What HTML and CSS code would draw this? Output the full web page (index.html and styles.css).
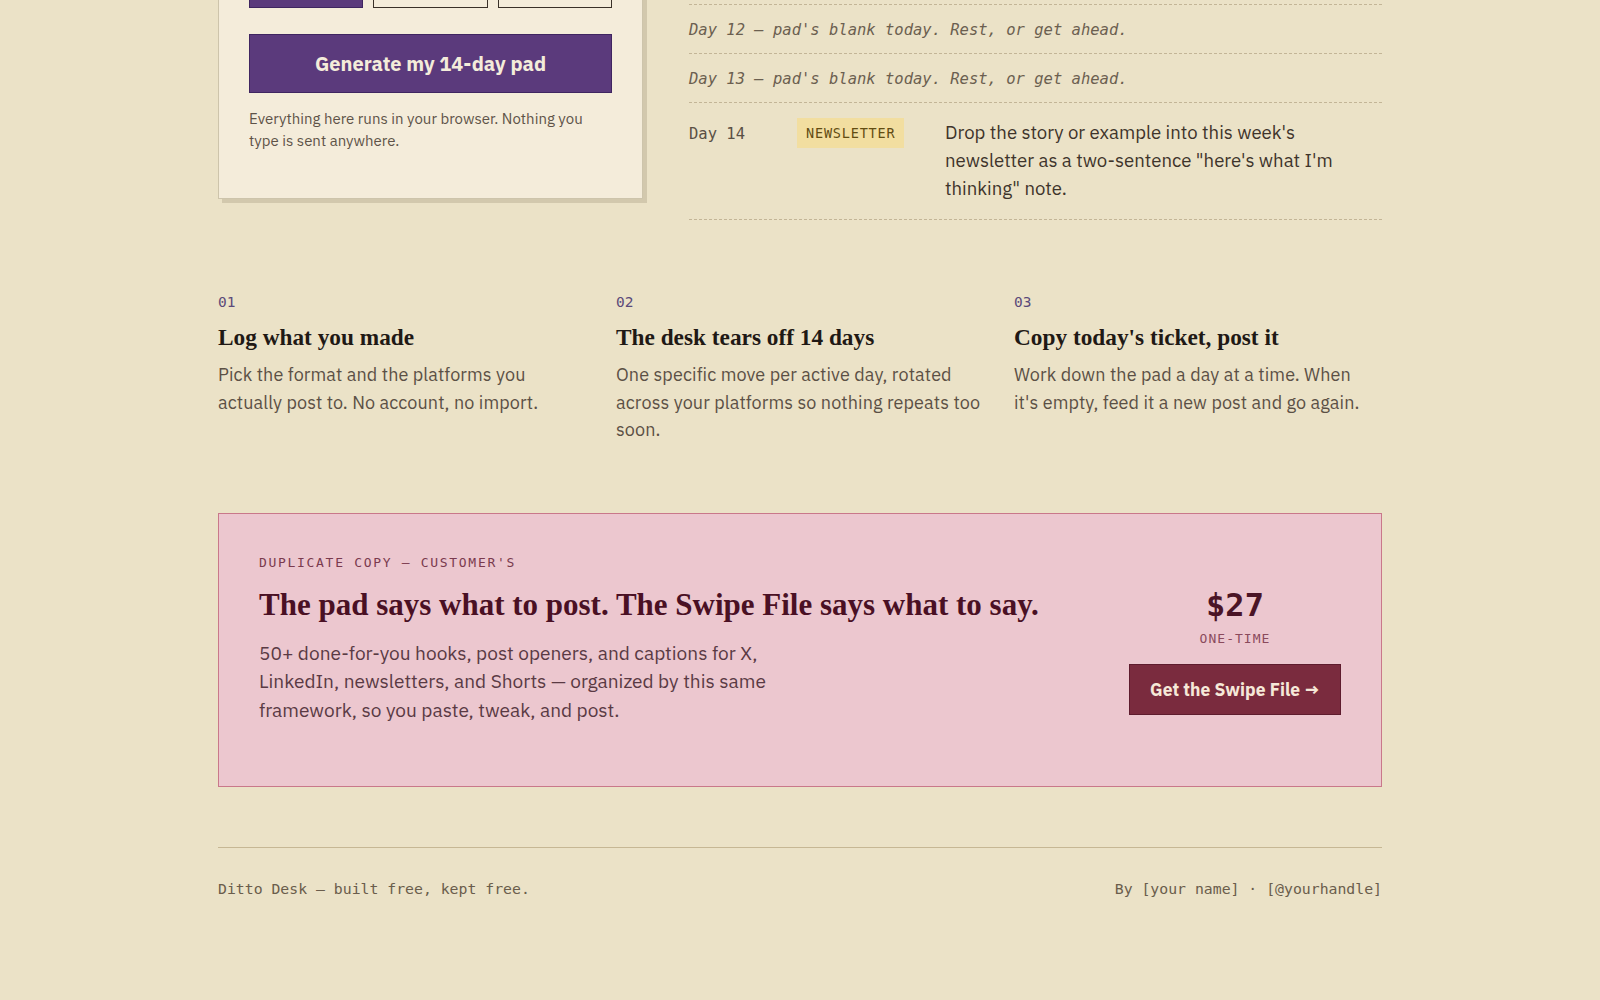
FILE: index.html
```html
<!DOCTYPE html>
<html lang="en">
<head>
<meta charset="utf-8">
<title>Ditto Desk</title>
<link rel="stylesheet" href="styles.css">
</head>
<body>
<main class="page">
  <section class="hero">
    <div class="card">
      <div class="opts">
        <button class="opt opt-on" aria-label="Post"></button>
        <button class="opt" aria-label="Thread"></button>
        <button class="opt" aria-label="Video"></button>
      </div>
      <button class="generate">Generate my 14-day pad</button>
      <p class="note">Everything here runs in your browser. Nothing you type is sent anywhere.</p>
    </div>
    <div class="days">
      <div class="row row-blank row-hidden"></div>
      <div class="row row-blank">Day 12 — pad's blank today. Rest, or get ahead.</div>
      <div class="row row-blank">Day 13 — pad's blank today. Rest, or get ahead.</div>
      <div class="row row-day">
        <span class="day-label">Day 14</span>
        <span class="badge">NEWSLETTER</span>
        <p class="day-text">Drop the story or example into this week's newsletter as a two-sentence "here's what I'm thinking" note.</p>
      </div>
    </div>
  </section>

  <section class="steps">
    <div class="step">
      <div class="step-num">01</div>
      <h3 class="step-title">Log what you made</h3>
      <p class="step-body">Pick the format and the platforms you actually post to. No account, no import.</p>
    </div>
    <div class="step">
      <div class="step-num">02</div>
      <h3 class="step-title">The desk tears off 14 days</h3>
      <p class="step-body">One specific move per active day, rotated across your platforms so nothing repeats too soon.</p>
    </div>
    <div class="step">
      <div class="step-num">03</div>
      <h3 class="step-title">Copy today's ticket, post it</h3>
      <p class="step-body">Work down the pad a day at a time. When it's&nbsp;empty, feed it a new post and go again.</p>
    </div>
  </section>

  <section class="promo">
    <div class="promo-main">
      <div class="promo-eyebrow">DUPLICATE COPY — CUSTOMER'S</div>
      <h2 class="promo-title">The pad says what to post. The Swipe File says what to say.</h2>
      <p class="promo-text">50+ done-for-you hooks, post openers, and captions for X, LinkedIn, newsletters, and Shorts — organized by this same framework, so you paste, tweak, and post.</p>
    </div>
    <div class="promo-buy">
      <div class="price">$27</div>
      <div class="price-note">ONE-TIME</div>
      <a class="buy" href="#">Get the Swipe File →</a>
    </div>
  </section>

  <footer class="foot">
    <span>Ditto Desk — built free, kept free.</span>
    <span>By [your name] · [@yourhandle]</span>
  </footer>
</main>
</body>
</html>
```

FILE: styles.css
```css
* { box-sizing: border-box; }

body {
  margin: 0;
  background: #ebe2c7;
  color: #3e342b;
  font-family: "IBM Plex Sans", Roboto, "Noto Sans", sans-serif;
}

.page {
  width: 1164px;
  margin: 0 auto;
  padding-bottom: 100px;
}

/* hero */
.hero {
  display: grid;
  grid-template-columns: 425px 1fr;
  gap: 46px;
  align-items: start;
  margin-top: -71px;
}

.card {
  background: #f4ecda;
  border: 1px solid #cdc4ab;
  box-shadow: 4px 4px 0 #d2c8ad;
  padding: 30px 30px 46px;
}

.opts {
  display: grid;
  grid-template-columns: repeat(3, 1fr);
  gap: 10px;
}

.opt {
  height: 48px;
  padding: 0;
  background: #f4ecda;
  border: 1px solid #3a3128;
}

.opt-on {
  background: #5b3a7c;
  border-color: #3f2560;
}

.generate {
  display: block;
  width: 100%;
  height: 59px;
  margin-top: 26px;
  background: #5b3a7c;
  border: 1px solid #3f2560;
  color: #f4ecda;
  font-family: "IBM Plex Sans", Roboto, sans-serif;
  font-weight: 700;
  font-size: 20px;
}

.note {
  margin: 15px 0 0;
  font-size: 15px;
  line-height: 22px;
  color: #5e5348;
}

.days {
  padding-top: 27px;
}

.row {
  border-bottom: 1px dashed #c3b597;
}

.row-blank {
  padding: 13px 0 11px;
  font-family: "DejaVu Sans Mono", monospace;
  font-style: italic;
  font-size: 15.5px;
  line-height: 24px;
  color: #6b5f50;
}

.row-hidden {
  height: 49px;
}

.row-day {
  display: grid;
  grid-template-columns: 108px 148px 1fr;
  align-items: start;
  padding: 16px 0 17px;
}

.day-label {
  font-family: "DejaVu Sans Mono", monospace;
  font-size: 15.5px;
  line-height: 30px;
  color: #5a5045;
}

.badge {
  justify-self: start;
  margin-top: -1px;
  padding: 0 9px;
  height: 30px;
  line-height: 30px;
  background: #f2dea0;
  font-family: "DejaVu Sans Mono", monospace;
  font-size: 13.5px;
  letter-spacing: 0.06em;
  color: #624c12;
}

.day-text {
  margin: -1px 0 0;
  max-width: 410px;
  font-size: 18.6px;
  line-height: 28px;
  color: #3e342b;
}

/* steps */
.steps {
  display: grid;
  grid-template-columns: repeat(3, 1fr);
  gap: 30px;
  padding-top: 72px;
}

.step-num {
  font-family: "DejaVu Sans Mono", monospace;
  font-size: 14.5px;
  line-height: 20px;
  color: #5b4a7a;
}

.step-title {
  margin: 11px 0 0;
  font-family: "Source Serif Pro", "Liberation Serif", serif;
  font-weight: 700;
  font-size: 23.3px;
  line-height: 28px;
  color: #1f1915;
}

.step-body {
  margin: 10px 0 0;
  font-size: 18px;
  line-height: 27.5px;
  letter-spacing: 0.1px;
  color: #5b5045;
}

/* promo */
.promo {
  display: flex;
  justify-content: space-between;
  align-items: center;
  margin-top: 69px;
  padding: 40px 40px;
  background: #ecc7cf;
  border: 1px solid #c9788a;
}

.promo-eyebrow {
  font-family: "DejaVu Sans Mono", monospace;
  font-size: 13px;
  line-height: 18px;
  letter-spacing: 0.13em;
  color: #7a3a4e;
}

.promo-title {
  margin: 15px 0 0;
  font-family: "Source Serif Pro", "Liberation Serif", serif;
  font-weight: 700;
  font-size: 31px;
  line-height: 36px;
  color: #4a1024;
}

.promo-text {
  margin: 16px 0 22px;
  max-width: 540px;
  font-size: 19.1px;
  line-height: 28.5px;
  color: #5a3a44;
}

.promo-buy {
  display: flex;
  flex-direction: column;
  align-items: center;
  width: 212px;
}

.price {
  font-family: "DejaVu Sans Mono", monospace;
  font-weight: 700;
  font-size: 32px;
  line-height: 40px;
  color: #4a1426;
}

.price-note {
  margin-top: 5px;
  font-family: "DejaVu Sans Mono", monospace;
  font-size: 13px;
  line-height: 18px;
  letter-spacing: 0.08em;
  color: #8a4a5c;
}

.buy {
  display: block;
  width: 212px;
  height: 51px;
  margin-top: 16px;
  background: #7a2b3e;
  border: 1px solid #5e1c2e;
  color: #f6e8d8;
  text-align: center;
  line-height: 49px;
  font-weight: 700;
  font-size: 17.5px;
  text-decoration: none;
}

/* footer */
.foot {
  display: flex;
  justify-content: space-between;
  margin-top: 60px;
  padding-top: 30px;
  border-top: 1px solid #c6b794;
  font-family: "DejaVu Sans Mono", monospace;
  font-size: 14.8px;
  line-height: 22px;
  color: #6a5d4c;
}
```
